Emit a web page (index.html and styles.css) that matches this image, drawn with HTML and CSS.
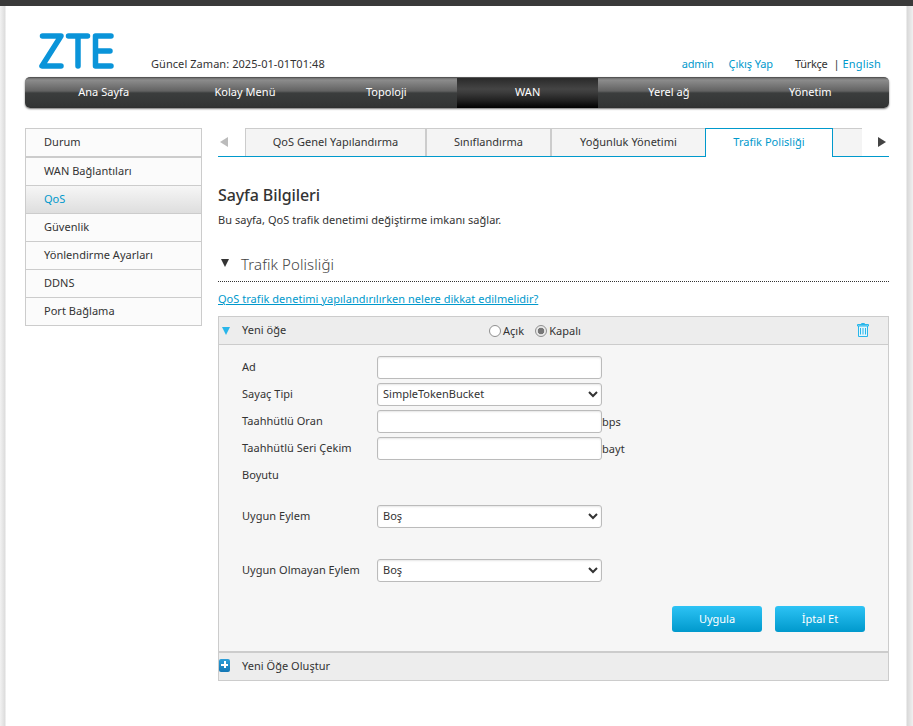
FILE: index.html
```html
<!DOCTYPE html>
<html lang="tr">
<head>
<meta charset="utf-8">
<title>ZTE</title>
<link rel="stylesheet" href="styles.css">
</head>
<body>
<div class="topbar"></div>
<div class="page">
  <header class="header">
    <svg class="logo" viewBox="0 0 75 36" width="75" height="36" aria-label="ZTE">
      <g fill="none" stroke="#0a94d9" stroke-width="5.5" stroke-linecap="round" stroke-linejoin="round">
        <path d="M3.5 3H22L3 33H22"/>
        <path d="M29.5 3H48.5M39 3V33"/>
        <path d="M72 3H56.5V33H72M56.5 18H71"/>
      </g>
    </svg>
    <div class="clock">Güncel Zaman: 2025-01-01T01:48</div>
    <div class="userlinks">
      <a class="ulink">admin</a>
      <a class="ulink">Çıkış Yap</a>
      <span class="lang">Türkçe</span>
      <span class="sep">|</span>
      <a class="ulink">English</a>
    </div>
  </header>
  <nav class="nav">
    <a class="nav-item">Ana Sayfa</a>
    <a class="nav-item">Kolay Menü</a>
    <a class="nav-item">Topoloji</a>
    <a class="nav-item active">WAN</a>
    <a class="nav-item">Yerel ağ</a>
    <a class="nav-item">Yönetim</a>
  </nav>
  <div class="main">
    <aside class="side">
      <a class="side-item">Durum</a>
      <a class="side-item">WAN Bağlantıları</a>
      <a class="side-item current">QoS</a>
      <a class="side-item">Güvenlik</a>
      <a class="side-item">Yönlendirme Ayarları</a>
      <a class="side-item">DDNS</a>
      <a class="side-item">Port Bağlama</a>
    </aside>
    <section class="content">
      <div class="tabs">
        <span class="tab-arrow left"></span>
        <a class="tab t1">QoS Genel Yapılandırma</a>
        <a class="tab t2">Sınıflandırma</a>
        <a class="tab t3">Yoğunluk Yönetimi</a>
        <a class="tab t4 on">Trafik Polisliği</a>
        <a class="tab t5"></a>
        <span class="tab-arrow right"></span>
      </div>
      <h1 class="title">Sayfa Bilgileri</h1>
      <p class="desc">Bu sayfa, QoS trafik denetimi değiştirme imkanı sağlar.</p>
      <h2 class="sub"><span class="tri-down"></span>Trafik Polisliği</h2>
      <a class="help">QoS trafik denetimi yapılandırılırken nelere dikkat edilmelidir?</a>
      <div class="panel">
        <div class="panel-head">
          <span class="tri-blue"></span>
          <span class="panel-name">Yeni öğe</span>
          <div class="radios">
            <label class="radio"><input type="radio" name="st">Açık</label>
            <label class="radio"><input type="radio" name="st" checked>Kapalı</label>
          </div>
          <svg class="trash" viewBox="0 0 12 14" width="12" height="14">
            <g fill="#e3f6fd" stroke="#29b6ea" stroke-width="1">
              <path d="M4.5 1.5V.5H7.5V1.5"/>
              <path d="M.5 3V1.5H11.5V3Z"/>
              <path d="M1.5 3V13.5H10.5V3Z"/>
              <path d="M3.5 5V11.5M6 5V11.5M8.5 5V11.5" fill="none"/>
            </g>
          </svg>
        </div>
        <div class="panel-body">
          <div class="form">
            <label class="f-label">Ad</label>
            <div class="f-field"><input class="ctl" type="text"></div>
            <label class="f-label">Sayaç Tipi</label>
            <div class="f-field"><select class="ctl sel"><option>SimpleTokenBucket</option></select></div>
            <label class="f-label">Taahhütlü Oran</label>
            <div class="f-field"><input class="ctl" type="text"><span class="unit">bps</span></div>
            <label class="f-label tall">Taahhütlü Seri Çekim Boyutu</label>
            <div class="f-field top"><input class="ctl" type="text"><span class="unit">bayt</span></div>
            <label class="f-label gapped">Uygun Eylem</label>
            <div class="f-field gapped"><select class="ctl sel"><option>Boş</option></select></div>
            <label class="f-label gapped">Uygun Olmayan Eylem</label>
            <div class="f-field gapped"><select class="ctl sel"><option>Boş</option></select></div>
          </div>
          <div class="actions">
            <button class="btn" type="button">Uygula</button>
            <button class="btn" type="button">İptal Et</button>
          </div>
        </div>
        <div class="panel-foot">
          <span class="plus"></span>
          <span class="foot-text">Yeni Öğe Oluştur</span>
        </div>
      </div>
    </section>
  </div>
</div>
</body>
</html>
```
FILE: styles.css
```css
* { box-sizing: border-box; }
html, body { margin: 0; padding: 0; }
body {
  width: 913px;
  height: 726px;
  overflow: hidden;
  background: #fff;
  color: #333;
  font-family: "Noto Sans", "Open Sans", sans-serif;
  font-size: 11px;
  letter-spacing: .03px;
}
a { color: inherit; text-decoration: none; }
.topbar { height: 6px; background: #3a3a3a; }
.page {
  height: 720px;
  padding: 0 24px 0 25px;
  background:
    linear-gradient(90deg, #f2f2f2 0, #dcdcdc 5px, #fff 6px, #fff 906px, #d8d8d8 907px, #f0f0f0 913px);
}
.header { height: 71px; display: flex; align-items: flex-end; padding-left: 14px; padding-bottom: 5px; }
.logo { display: block; margin-bottom: 3px; }
.clock { margin-left: 37px; margin-bottom: 1px; color: #333; line-height: 14px; letter-spacing: .06px; }
.userlinks { margin-left: auto; margin-right: 8px; margin-bottom: 1px; display: flex; gap: 4px; line-height: 14px; }
.ulink { color: #0099cc; letter-spacing: .15px; }
.ulink:nth-child(1) { margin-right: 11px; letter-spacing: -.2px; }
.ulink:nth-child(2) { margin-right: 18px; letter-spacing: -.1px; }
.lang { color: #333; letter-spacing: -.3px; margin-right: 2px; }
.sep { color: #333; margin-right: -1px; }
.nav {
  height: 31px;
  display: flex;
  padding: 0 8px;
  border-radius: 5px;
  border-top: 1px solid #555;
  background: linear-gradient(#6e6e6e 0, #8c8c8c 2px, #626262 13px, #3b3d3d 15px, #333535 28px, #2c2c2c 31px);
  box-shadow: 0 1px 2px rgba(0, 0, 0, .55);
}
.nav-item { flex: 1; text-align: center; color: #fff; line-height: 27px; }
.nav-item.active { background: linear-gradient(#2a2a2a 0, #444 11px, #3a3a3a 15px, #222 22px, #000 30px); }
.main { display: flex; margin-top: 20px; gap: 16px; }
.side {
  width: 177px;
  flex: none;
  height: 198px;
  border: 1px solid #ccc;
  background: #fbfbfb;
  display: flex;
  flex-direction: column;
}
.side-item { flex: none; height: 28px; padding-left: 18px; line-height: 26px; color: #333; border-bottom: 1px solid #ccc; }
.side-item:first-child { height: 29px; border-bottom-width: 2px; }
.side-item:last-child { height: 27px; border-bottom: 0; }
.side-item.current { color: #0099cc; background: linear-gradient(#f6f6f6, #dedede); }
.content { width: 671px; flex: none; }
.tabs { height: 29px; display: flex; align-items: stretch; border-bottom: 1px solid #0099cc; }
.tab {
  height: 28px;
  background: #f4f4f4;
  border-top: 1px solid #ccc;
  border-right: 2px solid #ccc;
  color: #333;
  text-align: center;
  line-height: 26px;
}
.t1 { width: 182px; border-left: 1px solid #ccc; }
.t2 { width: 125px; }
.t3 { width: 153px; border-right: 0; }
.t4 { width: 128px; }
.t5 { width: 29px; border-right: 0; }
.tab.on {
  height: 29px;
  color: #0099cc;
  background: #fff;
  border: 1px solid #0099cc;
  border-bottom: 0;
}
.tab-arrow { width: 27px; flex: none; position: relative; }
.tab-arrow::after { content: ""; position: absolute; top: 9px; border-style: solid; border-width: 5px 0; border-color: transparent; }
.tab-arrow.left::after { left: 2px; border-right: 8px solid #bbb; }
.tab-arrow.right::after { right: 3px; border-left: 8px solid #444; }
.title { margin: 27px 0 0; font-size: 16px; font-weight: 500; letter-spacing: -.1px; line-height: 22px; color: #333; }
.desc { margin: 6px 0 0; line-height: 16px; }
.sub { margin: 25px 0 0; height: 29px; font-size: 15px; font-weight: 300; line-height: 22px; letter-spacing: .1px; color: #444; border-bottom: 1px dotted #333; display: flex; align-items: flex-start; gap: 12px; }
.tri-down { width: 0; height: 0; margin: 6px 0 0 3px; border-style: solid; border-width: 8px 4.5px 0; border-color: #333 transparent transparent; }
.help { display: block; margin-top: 9px; line-height: 16px; color: #0099cc; text-decoration: underline; }
.panel { margin-top: 9px; border: 1px solid #ccc; background: #f6f6f6; }
.panel-head { height: 28px; display: flex; align-items: center; background: #ededed; border-bottom: 1px solid #ccc; position: relative; }
.tri-blue { width: 0; height: 0; margin: 1px 0 0 3px; border-style: solid; border-width: 8px 4.5px 0; border-color: #29b6ea transparent transparent; }
.panel-name { margin-left: 12px; margin-top: -3px; }
.radios { position: absolute; left: 270px; top: 6px; display: flex; gap: 11px; }
.radio { display: flex; align-items: center; line-height: 16px; }
.radio input {
  appearance: none;
  width: 12px;
  height: 12px;
  margin: 0 2px 0 0;
  border: 1px solid #8f8f8f;
  border-radius: 50%;
  background: #fff;
}
.radio input:checked { background: radial-gradient(circle, #777 0, #777 3px, #e8e8e8 3.6px); }
.trash { position: absolute; right: 19px; top: 6px; }
.panel-body { padding: 11px 23px 19px; height: 308px; border-bottom: 2px solid #ccc; }
.form { display: grid; grid-template-columns: 135px 1fr; grid-auto-rows: 27px; }
.f-label { display: block; line-height: 21px; }
.f-field { display: flex; align-items: flex-start; }
.f-label.tall { grid-row: span 2; line-height: 27px; padding-right: 20px; margin-top: -3px; }
.f-field.top { grid-row: span 2; }
.f-label.gapped, .f-field.gapped { height: 54px; padding-top: 14px; }
.form .gapped { grid-row: span 2; }
.ctl {
  width: 225px;
  height: 23px;
  padding: 0;
  border: 1px solid #bbb;
  border-radius: 3px;
  background: #fff;
  color: #333;
  font: inherit;
  letter-spacing: 0;
  box-shadow: inset 0 1px 2px rgba(0,0,0,.1);
}
.sel { padding: 0 0 2px 1px; }
.unit { line-height: 23px; }
.actions { display: flex; justify-content: flex-end; gap: 13px; margin-top: 7px; }
.btn {
  width: 90px;
  height: 26px;
  border: 0;
  border-radius: 3px;
  background: linear-gradient(#2dc3f5, #0099cc);
  color: #fff;
  font: inherit;
  padding: 0 0 2px;
}
.panel-foot { height: 27px; display: flex; align-items: center; gap: 12px; background: #ededed; }
.foot-text { margin-top: -3px; }
.plus { width: 11px; height: 13px; border-radius: 2px; background: linear-gradient(#2e9fd8, #1377b5); position: relative; margin-top: -3px; }
.plus::before { content: ""; position: absolute; left: 2px; right: 2px; top: 5px; height: 2px; background: #fff; }
.plus::after { content: ""; position: absolute; top: 2px; bottom: 4px; left: 4.5px; width: 2px; background: #fff; }
```
